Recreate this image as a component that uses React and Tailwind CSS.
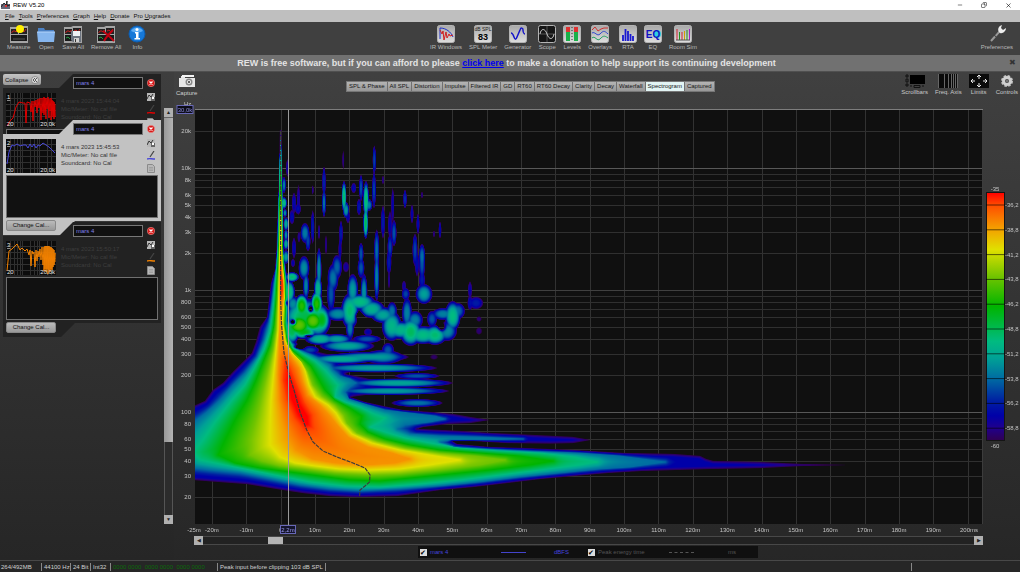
import { useEffect, useRef } from "react";
import { Minus, X, Copy } from "lucide-react";

const PLOT = { left: 195, top: 110, width: 788, height: 414 };

const xOf = (ms) => 280.6 + ms * 3.435;
const yOf = (hz) => 290 - 122 * Math.log10(hz / 1000);

// level (0..1) -> colour, same stops as the scale on the right
const STOPS = [
  [0, [48, 0, 80]],
  [0.05, [32, 0, 140]],
  [0.1, [0, 0, 168]],
  [0.16, [0, 32, 162]],
  [0.25, [0, 108, 162]],
  [0.33, [0, 160, 150]],
  [0.4, [0, 187, 128]],
  [0.47, [0, 184, 64]],
  [0.54, [0, 180, 0]],
  [0.66, [112, 196, 0]],
  [0.77, [224, 224, 0]],
  [0.86, [245, 155, 0]],
  [0.95, [255, 76, 0]],
  [1, [255, 0, 0]],
];

const LEVELS = [0, 0.25, 0.4, 0.54, 0.66, 0.77, 0.87, 0.96];

// contours of the main decay, one list of polygons per level
const CONTOURS = [
  [
    "150,420 194,406 205,401 213,390 223,383 233,372 242,363 252,353 256,342 260,327 267,317 269,300 271,283 275,270 276.5,250 277,230 278.3,200 279,170 279.5,153 280,130 281.2,130 281.7,153 282.3,170 283.2,200 283.5,240 285,262 287,275 288,290 290,305 289,320 291,335 295,341 300,346 308,350 318,352 335,356 352,357 352,360 340,365 352,368 352,371 345,374 355,376 365,378 372,380 372,385 383,387 372,389 372,394 350,397 365,402 383,406 403,410 430,412 453,414 470,417 489,420 470,423 447,424 423,427 417,429 440,430 460,431 490,433 533,435 573,437 590,440 573,443 550,443.5 507,443 473,441 452,441 457,444 490,447 523,448 573,450 623,453 673,454 700,456 706,459 713,461 760,462 800,464 845,465 800,466 760,468 707,469 673,470 640,471 607,473 573,476 540,479 507,483 473,487 440,490 397,496 357,497 330,496 303,493 277,489 247,484 220,482 194,480 150,478",
  ],
  [
    "150,445 194,422 207,412 220,400 233,385 245,373 257,357 264,340 269,322 272,300 274,283 276,267 277.3,250 278.2,210 279.4,165 280,138 281.2,138 281.8,165 282.7,210 283,250 285,270 287,285 288,300 287,320 288,335 292,343 300,350 312,355 322,360 330,365 333,370 340,376 350,379 356,383 350,387 345,392 349,399 365,404 385,410 410,413 435,416 445,419 430,422 405,425 398,429 410,434 440,436 480,437 523,439 480,440 450,440 440,442 455,447 490,449 530,451 580,453 620,456 665,462 630,467 600,469 560,473 520,477 480,482 440,486 400,489 360,491 330,489 300,485 270,479 240,473 210,470 194,468 150,466",
  ],
  [
    "193,452 203,440 215,422 232,400 245,385 255,367 264,350 270,332 273,310 275,285 277,265 278.2,240 279,200 279.8,165 280.2,145 281,145 281.4,165 282.2,200 282.6,240 284,265 286,283 287,300 286,322 288,338 293,347 303,354 315,361 325,370 332,378 338,385 336,391 335,397 345,402 360,407 372,413 385,418 380,422 370,427 385,432 405,438 430,443 460,448 500,451 540,453 575,457 597,462 580,465 540,470 500,475 460,480 420,484 380,487 345,486 310,482 280,476 250,470 220,464 200,460",
  ],
  [
    "218,455 225,440 235,420 247,400 256,380 263,362 270,345 274,325 276,300 277,280 278,260 278.7,240 279.5,205 280.2,170 281,170 281.8,205 282.2,240 283.2,262 285,280 285.5,300 285,325 287,341 293,351 302,358 311,366 318,378 325,390 335,400 350,408 362,416 360,424 368,432 385,439 410,445 440,450 480,453 520,456 553,461 530,465 490,470 450,474 410,478 380,481 350,480 320,476 290,472 260,468 235,463",
  ],
  [
    "250,455 250,440 257,415 263,390 268,370 273,350 276,330 277.5,300 278,280 278.8,260 279.3,235 280,195 281.2,195 281.8,235 282.7,262 284.5,280 285,300 284,325 287,344 294,354 302,362 308,372 313,385 322,396 335,405 344,415 347,423 357,433 377,441 405,448 440,453 475,456 505,460 480,465 440,470 400,474 370,475 335,473 305,469 280,466 262,461",
  ],
  [
    "270,445 270,425 271,400 274,370 276,350 278,330 278.5,300 279,280 279.5,258 280,220 281.2,220 281.8,258 284,280 284.5,298 282.5,320 285,340 292,353 300,360 305,370 309,385 315,397 328,405 336,413 342,423 352,434 372,443 400,450 430,455 460,460 430,465 400,469 370,470 340,469 315,466 295,463 280,457",
  ],
  [
    "283,420 279,400 278,375 279,350 280,325 280,300 279.8,272 280.6,255 282,272 283.5,285 283.5,297 282,310 281.7,325 284,343 292,358 299,368 303,382 308,395 320,405 330,416 338,426 348,437 368,447 392,453 410,459 395,463 365,465 335,463 312,459 296,450 288,437",
  ],
  [
    "285,360 290,368 297,385 304,402 312,415 313,428 305,430 295,418 287,400 283,380",
    "280.5,270 282.5,280 282.8,290 281.5,297 280.5,290",
  ],
].map((level) =>
  level.map((s) => s.split(" ").map((p) => p.split(",").map(Number)))
);

// later reflections: x, y, rx, ry, peak
const BLOBS = [
  [284, 185, 2, 8, 0.28], [284, 203, 3, 6, 0.4], [285, 213, 2, 4, 0.3], [286, 224, 2.5, 7, 0.35],
  [286, 235, 2, 6, 0.3], [286, 244, 2.5, 6, 0.35], [286, 257, 3, 7, 0.33], [287.5, 168, 1.5, 8, 0.08],
  [294, 203, 2, 10, 0.12], [298.5, 200, 1.5, 14, 0.08], [298, 209, 3, 5, 0.12], [292, 217, 2.5, 7, 0.12],
  [312.7, 190, 1, 4, 0.05], [324, 182, 1.8, 15, 0.17], [324, 203, 2, 14, 0.26], [343.3, 160, 1, 8, 0.04],
  [344, 197, 2.5, 16, 0.42], [346, 210, 3.2, 8, 0.32], [348, 217, 2, 6, 0.1], [353.7, 188, 2.5, 5, 0.12],
  [361, 188, 2, 13, 0.22], [359, 207, 2.2, 8, 0.14], [366, 200, 3, 19, 0.42], [365.7, 223, 2.6, 16, 0.44],
  [369, 205, 3.5, 6, 0.28], [374.3, 160, 1.8, 14, 0.2], [374, 190, 2, 18, 0.2], [383, 180, 1, 4, 0.05],
  [383, 222, 2, 16, 0.15], [392.7, 205, 1.5, 16, 0.1], [390, 225, 2, 13, 0.1], [394, 233, 2.6, 13, 0.22],
  [390, 247, 2.6, 12, 0.2], [405, 199, 1.8, 9, 0.18], [412, 214, 1.6, 9, 0.1], [418, 224, 1.6, 10, 0.12],
  [422, 195, 1, 3, 0.04], [440, 230, 1.5, 8, 0.11], [434, 234, 1, 3, 0.04], [415, 250, 2.6, 16, 0.2],
  [422, 256, 3.2, 12, 0.25], [305, 233, 4.5, 10, 0.27], [312.7, 227, 1.8, 16, 0.15], [308, 241, 2.6, 10, 0.2],
  [294, 248, 2, 10, 0.12], [299, 237, 1.5, 5, 0.06], [341, 233, 1.8, 12, 0.15], [340, 250, 1.6, 12, 0.1],
  [361, 254, 2.6, 11, 0.22], [376.7, 250, 2.6, 20, 0.25], [319, 232, 1, 7, 0.07], [326, 245, 1, 9, 0.05],
  [293, 263, 2, 4, 0.1], [304, 268, 5.5, 12, 0.3], [306, 286, 3, 14, 0.28], [319, 270, 2.6, 22, 0.3],
  [318, 289, 4, 14, 0.38], [337, 267, 5, 12, 0.24], [333, 278, 5.5, 14, 0.26], [331, 294, 4, 18, 0.22],
  [346, 267, 3, 5, 0.08], [361, 268, 3.5, 10, 0.22], [376.7, 277, 2.6, 24, 0.28], [389, 262, 2.5, 12, 0.15],
  [389, 280, 1, 8, 0.06], [352.7, 290, 5.5, 16, 0.32], [364, 292, 3.5, 18, 0.3], [417, 264, 2, 12, 0.12],
  [422, 264, 3, 16, 0.22], [424, 294, 8.5, 10, 0.33], [422, 280, 3, 8, 0.15], [405.7, 294, 4, 6, 0.2],
  [404, 286, 2, 5, 0.08], [292, 277, 7, 5, 0.42], [289, 292, 6, 12, 0.42], [293, 304, 6, 8, 0.3],
  [305, 318, 22, 20, 0.46], [318, 320, 13, 17, 0.46], [292, 330, 8, 14, 0.46],
  [301.7, 306, 7, 12, 0.58], [316.7, 304, 6, 13, 0.58], [299, 325, 14, 12, 0.64], [313, 321, 12, 12, 0.64],
  [321.7, 320, 8, 13, 0.52], [304, 332, 13, 7, 0.52], [338, 314, 13, 7, 0.3], [350, 311, 9, 18, 0.42],
  [360, 302, 15, 8, 0.4], [371.7, 309, 13, 9, 0.37], [383, 315, 12, 8, 0.34], [391.7, 326, 10, 15, 0.38],
  [392, 311, 5, 9, 0.26], [401, 330, 14, 9, 0.38], [410.7, 332, 11, 14, 0.44], [423, 335, 15, 9, 0.4],
  [435, 335, 12, 10, 0.42], [407, 313, 5, 15, 0.28], [415, 320, 8, 9, 0.28], [447, 331, 10, 10, 0.3],
  [452.7, 316, 8, 15, 0.4], [458, 311, 7, 8, 0.25], [443, 314, 11, 6, 0.28], [432, 319, 5, 8, 0.22],
  [476, 303, 7, 6, 0.15], [470, 290, 2, 8, 0.09], [470, 303, 2.5, 7, 0.12], [479, 319, 2.2, 2.2, 0.03],
  [479, 331, 2.6, 3, 0.03], [320, 339, 15, 6, 0.37], [337, 339, 15, 5, 0.33], [347, 346, 27, 6, 0.34],
  [367, 339, 14, 4, 0.22], [350, 328, 4, 12, 0.27], [368, 332, 4, 3.5, 0.1], [383, 357, 20, 7, 0.3],
  [388, 350, 6, 7, 0.22], [368, 357, 40, 5, 0.32], [342, 359, 34, 5, 0.36], [376, 368, 60, 4.5, 0.33],
  [417, 376, 22, 3, 0.22], [398, 383, 54, 4.5, 0.34], [390, 391, 58, 4, 0.32], [417, 403, 25, 4, 0.26],
  [434, 357, 3, 2, 0.02], [310, 350, 9, 4, 0.2],
];

const HOLES = [
  [293, 322, 3.5, 3.5, 0.75], [310.6, 309, 3, 4, 0.6], [286.5, 303, 2, 4, 0.3], [299, 347, 6, 2.5, 0.5],
  [442, 327, 5, 5, 0.4], [359, 316, 5, 5, 0.35], [308, 336, 5, 2, 0.4],
];

const ENERGY_PATH =
  "M280.6 131V300L281.7 327 284 353 288.7 373 294 390 300 412 306.7 430 313 442 323 451 337 457 353 463 365 468 370 475 369.5 482 365 486 360 490 359.5 497";

const insidePoly = (poly, x, y) => {
  let inside = false;
  for (let i = 0, j = poly.length - 1; i < poly.length; j = i++) {
    const [xi, yi] = poly[i];
    const [xj, yj] = poly[j];
    if (yi > y !== yj > y && x < ((xj - xi) * (y - yi)) / (yj - yi) + xi) {
      inside = !inside;
    }
  }
  return inside;
};

const distance = (polys, x, y) => {
  let best = 1e9;
  for (const poly of polys) {
    for (let i = 0, j = poly.length - 1; i < poly.length; j = i++) {
      const ax = poly[j][0];
      const ay = poly[j][1];
      const dx = poly[i][0] - ax;
      const dy = poly[i][1] - ay;
      let u = ((x - ax) * dx + (y - ay) * dy) / (dx * dx + dy * dy);
      u = u < 0 ? 0 : u > 1 ? 1 : u;
      const ex = ax + u * dx - x;
      const ey = ay + u * dy - y;
      const d = ex * ex + ey * ey;
      if (d < best) best = d;
    }
  }
  return Math.sqrt(best);
};

const mainLevel = (x, y) => {
  let k = -1;
  while (k < LEVELS.length - 1 && CONTOURS[k + 1].some((p) => insidePoly(p, x, y))) k++;
  if (k < 0) return -0.05 * distance(CONTOURS[0], x, y);
  const d0 = distance(CONTOURS[k], x, y);
  if (k === LEVELS.length - 1) return Math.min(1, LEVELS[k] + d0 * 0.008);
  const d1 = distance(CONTOURS[k + 1], x, y);
  let f = d0 / (d0 + d1);
  if (k === 0) f = Math.max(f, Math.min(0.4, d0 * 0.14));
  return LEVELS[k] + (LEVELS[k + 1] - LEVELS[k]) * f;
};

const colourOf = (t) => {
  for (let i = 1; i < STOPS.length; i++) {
    if (t <= STOPS[i][0]) {
      const [a, ca] = STOPS[i - 1];
      const [b, cb] = STOPS[i];
      const f = Math.max(0, (t - a) / (b - a));
      return ca.map((c, n) => c + (cb[n] - c) * f);
    }
  }
  return STOPS[STOPS.length - 1][1];
};

const SOFT = 0.03;

const drawSpectrogram = (canvas) => {
  const ctx = canvas.getContext("2d");
  const { width, height, left, top } = PLOT;
  const field = new Float32Array(width * height);

  const addBlob = ([bx, by, rx, ry, peak], fn) => {
    const x0 = Math.max(0, Math.floor(bx - rx * 1.6 - left));
    const x1 = Math.min(width - 1, Math.ceil(bx + rx * 1.6 - left));
    const y0 = Math.max(0, Math.floor(by - ry * 1.6 - top));
    const y1 = Math.min(height - 1, Math.ceil(by + ry * 1.6 - top));
    for (let y = y0; y <= y1; y++) {
      for (let x = x0; x <= x1; x++) {
        const r2 = ((x + left + 0.5 - bx) / rx) ** 2 + ((y + top + 0.5 - by) / ry) ** 2;
        fn(y * width + x, peak, r2);
      }
    }
  };

  for (let y = 0; y < height; y++) {
    for (let x = 0; x < width; x++) {
      const px = x + left + 0.5;
      const py = y + top + 0.5;
      const t = px > 850 || (px > 310 && py < 335) ? -0.5 : mainLevel(px, py);
      field[y * width + x] = Math.exp(t / SOFT);
    }
  }
  BLOBS.forEach((b) =>
    addBlob(b, (i, peak, r2) => {
      field[i] += Math.exp((peak * (1 - r2 ** 1.3)) / SOFT);
    })
  );
  for (let i = 0; i < field.length; i++) field[i] = SOFT * Math.log(field[i]);
  HOLES.forEach((b) =>
    addBlob(b, (i, depth, r2) => {
      field[i] -= depth * Math.exp(-r2 * 2);
    })
  );

  const img = ctx.createImageData(width, height);
  for (let i = 0; i < field.length; i++) {
    const t = field[i];
    if (t < -0.03) continue;
    const [r, g, b] = colourOf(t);
    img.data[i * 4] = r;
    img.data[i * 4 + 1] = g;
    img.data[i * 4 + 2] = b;
    img.data[i * 4 + 3] = t > 0.01 ? 255 : ((t + 0.03) / 0.04) * 255;
  }
  ctx.putImageData(img, 0, 0);
};

const FREQS = [
  [20000, "20k"], [10000, "10k"], [8000, "8k"], [6000, "6k"], [5000, "5k"], [4000, "4k"], [3000, "3k"],
  [2000, "2k"], [1000, "1k"], [800, "800"], [600, "600"], [500, "500"], [400, "400"], [300, "300"],
  [200, "200"], [100, "100"], [80, "80"], [60, "60"], [50, "50"], [40, "40"], [30, "30"], [20, "20"],
];
const FREQ_LINES = [9000, 7000, 900, 700, 90, 70];
const TIMES = Array.from({ length: 23 }, (_, i) => i * 10 - 20);
const SCALE = ["-36,2", "-38,8", "-41,2", "-43,8", "-46,2", "-48,8", "-51,2", "-53,8", "-56,2", "-58,8"];

const Chart = () => {
  const ref = useRef(null);
  useEffect(() => drawSpectrogram(ref.current), []);

  return (
    <svg viewBox="174 98 846 438" className="block w-full h-auto" fontSize="6" fill="#c4c4c4">
      <defs>
        <linearGradient id="scale" x1="0" y1="1" x2="0" y2="0">
          {STOPS.map(([t, c]) => (
            <stop key={t} offset={t} stopColor={`rgb(${c.join(",")})`} />
          ))}
        </linearGradient>
      </defs>

      <rect x="195" y="110" width="788" height="414" fill="#101010" />
      <g shapeRendering="crispEdges">
        {TIMES.map((t) => (
          <rect key={t} x={Math.round(xOf(t))} y="110" width="1" height="414" fill="#323232" />
        ))}
        {[...FREQS.map((f) => f[0]), ...FREQ_LINES].map((f) => (
          <rect
            key={f}
            x="195"
            y={Math.round(yOf(f))}
            width="788"
            height="1"
            fill={f === 100 || f === 10000 ? "#585858" : f === 1000 ? "#404040" : "#303030"}
          />
        ))}
        <rect x="195" y="109" width="788" height="1" fill="#7d7d7d" />
        <rect x="982" y="110" width="1" height="414" fill="#3c3c3c" />
      </g>

      <foreignObject x="195" y="110" width="788" height="414">
        <canvas ref={ref} width={PLOT.width} height={PLOT.height} className="block" />
      </foreignObject>

      <path d={ENERGY_PATH} fill="none" stroke="#3c3c3c" strokeWidth="1.2" strokeDasharray="4 1" />
      <rect x="288" y="110" width="1" height="418" fill="#9a9a9a" shapeRendering="crispEdges" />

      <text x="184" y="106">Hz</text>
      <g textAnchor="end">
        {FREQS.map(([f, label]) => (
          <text key={f} x="191" y={yOf(f) + 2}>{label}</text>
        ))}
      </g>
      <rect x="177" y="105.5" width="16" height="8" fill="#0c0c18" stroke="#6868b8" />
      <text x="185" y="112" textAnchor="middle" fill="#8c8cd8">30,0k</text>

      <g textAnchor="middle">
        <text x="194" y="532">-25m</text>
        {TIMES.filter((t) => t < 200).map((t) => (
          <text key={t} x={xOf(t)} y="532">{t === 0 ? "0" : `${t}m`}</text>
        ))}
        <text x="969" y="532">200ms</text>
      </g>
      <rect x="280.5" y="525.5" width="15" height="8" fill="#14142c" stroke="#6868b8" />
      <text x="288" y="532" textAnchor="middle" fill="#9c9cf0">2,2m</text>

      <rect x="986.5" y="192.5" width="18" height="248" fill="url(#scale)" stroke="#151515" />
      <text x="995" y="191" textAnchor="middle">-35</text>
      {SCALE.map((s, i) => (
        <g key={s}>
          <rect x="986" y={204.5 + i * 24.8} width="19" height="1" fill="#000" opacity="0.6" />
          <text x="1005" y={207 + i * 24.8}>{s}</text>
        </g>
      ))}
      <text x="995" y="448" textAnchor="middle">-60</text>
    </svg>
  );
};

const Tile = ({ children, dark }) => (
  <svg viewBox="0 0 18 18" className="w-[18px] h-[18px]">
    <defs>
      <linearGradient id="tile" x1="0" y1="0" x2="0" y2="1">
        <stop offset="0" stopColor="#a8a8a8" />
        <stop offset="1" stopColor="#dedede" />
      </linearGradient>
    </defs>
    <rect x="0.5" y="0.5" width="17" height="17" rx="2" fill={dark ? "#161616" : "url(#tile)"} stroke="#b4b4b4" />
    {children}
  </svg>
);

// small stack of graph panels used by measure / save / remove
const Panels = ({ children }) => (
  <svg viewBox="0 0 18 18" className="w-[18px] h-[18px]">
    <path d="M0 2H7L9 1H18V18H0Z" fill="#a4a4a4" />
    <rect x="1" y="4" width="7" height="5" fill="#222" />
    <rect x="9" y="3" width="8" height="6" fill="#222" />
    <rect x="1" y="10" width="16" height="6" fill="#1a1a1a" />
    <path d="M1.500 8 3 6 5 6 6 7 7.500 5" stroke="#c02020" fill="none" />
    <path d="M10 6 12 5 14 7 16 4" stroke="#c02020" fill="none" />
    {children}
  </svg>
);

const Floppy = () => (
  <g>
    <path d="M7 6H17V17H9L7 15Z" fill="#6c7480" />
    <rect x="9" y="6" width="7" height="5" fill="#eef2f6" />
    <rect x="10" y="13" width="5" height="4" fill="#d0d0d0" />
    <rect x="11" y="14" width="1" height="3" fill="#333" />
  </g>
);

const fileTools = [
  ["Measure", <Panels><circle cx="10" cy="4" r="4" fill="#ffee00" /><path d="M3 14H15" stroke="#555" /></Panels>],
  [
    "Open",
    <svg viewBox="0 0 18 18" className="w-[18px] h-[18px]">
      <path d="M1 3H7L8 5H17V16H1Z" fill="#4a80c4" />
      <path d="M0 7H18L17 17H1Z" fill="#86b6ee" />
      <path d="M0 7H18" stroke="#b4d4fa" />
    </svg>,
  ],
  ["Save All", <Panels><path d="M2 13 4 12 6 14" stroke="#20a040" fill="none" /><Floppy /></Panels>],
  [
    "Remove All",
    <Panels><path d="M2 13 4 12 6 14" stroke="#20a040" fill="none" /><path d="M6 6C10 9 13 12 17 16M16 5C12 9 9 12 7 16" stroke="#c00010" strokeWidth="2" fill="none" /></Panels>,
  ],
  [
    "Info",
    <svg viewBox="0 0 18 18" className="w-[18px] h-[18px]">
      <circle cx="9" cy="9" r="8" fill="#1678d8" stroke="#0c5cb0" />
      <path d="M3 6A7 7 0 0 1 15 6Q9 9 3 6Z" fill="#5cacf4" />
      <circle cx="9" cy="4.500" r="1.500" fill="#fff" />
      <path d="M7 7H10.500V13H12V14.500H6.500V13H8V8.500H7Z" fill="#fff" />
    </svg>,
  ],
];

const signalTools = [
  ["IR Windows", <Tile><path d="M3 14V3C9 3 14 7 16 12" stroke="#2030c8" fill="none" /><path d="M3 5 5 9 6 6 7 15 9 7 10 13 12 9 13 11 16 10" stroke="#d02020" fill="none" /></Tile>],
  [
    "SPL Meter",
    <Tile>
      <text x="9" y="6" textAnchor="middle" fontSize="5" fill="#222">dB SPL</text>
      <text x="9" y="15" textAnchor="middle" fontSize="9" fontWeight="700" fill="#000">83</text>
    </Tile>,
  ],
  ["Generator", <Tile><path d="M2 8C3 8 4 9 5 12S7 15 8 12L11 5C12 2 14 3 14 5S15 9 16 9" stroke="#1414c8" strokeWidth="1.500" fill="none" /></Tile>],
  ["Scope", <Tile dark><path d="M1 9H17M9 1V17" stroke="#555" /><path d="M2 9C3 3 7 3 9 9S15 15 16 9" stroke="#c8c8c8" fill="none" /></Tile>],
  [
    "Levels",
    <Tile>
      <rect x="3" y="2" width="4" height="14" fill="#18b048" /><rect x="3" y="2" width="4" height="5" fill="#e03030" />
      <rect x="11" y="2" width="4" height="14" fill="#18b048" /><rect x="11" y="2" width="4" height="5" fill="#e03030" />
      <path d="M9 2V16" stroke="#333" strokeDasharray="1 2" />
    </Tile>,
  ],
  [
    "Overlays",
    <Tile>
      <path d="M1 5 4 2 7 6 10 4 13 3 17 3" stroke="#d03030" fill="none" />
      <path d="M1 8C4 6 6 12 9 9S13 5 17 9" stroke="#3048d0" fill="none" />
      <path d="M1 13C4 10 6 17 9 14S13 10 17 13" stroke="#20a060" fill="none" />
    </Tile>,
  ],
  ["RTA", <Tile><path d="M4 16V10M6.500 16V4M9 16V6M11.500 16V9M14 16V11" stroke="#1818d0" strokeWidth="1.800" /></Tile>],
  [
    "EQ",
    <Tile>
      <circle cx="13" cy="9" r="4" fill="#30d0e0" />
      <text x="9" y="13" textAnchor="middle" fontSize="10" fontWeight="700" fill="#1010c0">EQ</text>
    </Tile>,
  ],
  ["Room Sim", <Tile><path d="M3 15V4M8 15V7" stroke="#d02030" /><path d="M5.500 15V7M13 15V5" stroke="#209020" /><path d="M10.500 15V6" stroke="#d0a000" /><path d="M15.500 15V4" stroke="#a020c0" /><path d="M2 15H16" stroke="#555" /></Tile>],
];

const prefTools = [
  [
    "Preferences",
    <svg viewBox="0 0 18 18" className="w-[18px] h-[18px]">
      <path d="M3 16 12 6" stroke="#999" strokeWidth="2" strokeDasharray="6 1" />
      <path d="M11 7C9 4 11 1 14 0L13 3 15 5 18 3C18 6 15 9 12 8Z" fill="#ececec" />
    </svg>,
  ],
];

const axisTools = [
  [
    "Scrollbars",
    <svg viewBox="0 0 20 14" className="w-5 h-[14px]">
      <rect x="5" y="1" width="15" height="9" fill="#000" />
      <path d="M1 1H3V3H1ZM1 5H3V8H1ZM1 10H3V12H1ZM5 12H7M9 11.500H15V13.500H9ZM17 12H19" stroke="#111" fill="none" />
    </svg>,
  ],
  [
    "Freq. Axis",
    <svg viewBox="0 0 20 14" className="w-5 h-[14px]">
      <rect width="20" height="14" fill="#0a0a0a" />
      <path d="M0.500 0V14M6.500 0V14M10.500 0V14M13.500 0V14M15.500 0V14M17.500 0V14M19.500 0V14" stroke="#666" />
    </svg>,
  ],
  [
    "Limits",
    <svg viewBox="0 0 20 14" className="w-5 h-[14px]">
      <rect width="20" height="14" fill="#0a0a0a" />
      <path d="M10 1V5M10 13V9M2 7H6M18 7H14M8 3L10 1 12 3M8 11L10 13 12 11M4 5 2 7 4 9M16 5 18 7 16 9" stroke="#e8e8e8" fill="none" />
    </svg>,
  ],
  [
    "Controls",
    <svg viewBox="0 0 14 14" className="w-[14px] h-[14px]">
      <circle cx="7" cy="7" r="5" fill="none" stroke="#c0c0c0" strokeWidth="2" strokeDasharray="2.500 1.427" />
      <circle cx="7" cy="7" r="3.500" fill="none" stroke="#d0d0d0" strokeWidth="3" />
      <circle cx="7" cy="7" r="1.500" fill="#777" />
    </svg>,
  ],
];

const ToolGroup = ({ items, className }) => (
  <div className={className}>
    {items.map(([label, icon]) => (
      <button key={label} className="flex flex-col items-center">
        {icon}
        <span className="leading-[9px] whitespace-nowrap">{label}</span>
      </button>
    ))}
  </div>
);

const TRACES = {
  red: "M1 33 4 28 7 25 10 14 13 9 17 10 19 10 20 30 21 9 24 10 25 19 26 8 27 28 28 8 29 14 30 7 31 20 32 6 33 15 34 5 35 27 36 5 37 20 38 4 38 22 39 5 40 26 40 5 41 16 42 4 43 25 43 6 44 18 45 5 45 27 46 7 47 24 47 8 48 26 48 9 49 24 49 11",
  blue: "M1 25 3 13 6 6 8 7 11 5 14 7 17 6 20 6 22 9 24 5 26 8 28 5 30 9 32 6 34 7 37 4 40 6 43 8 46 11 49 14",
  orange: "M1 30 3 10 6 8 8 6 11 3 14 9 16 7 19 10 21 8 23 14 24 9 25 25 26 10 27 13 28 11 29 26 30 9 31 20 32 10 33 16 34 8 35 19 36 6 37 24 38 6 38 30 39 5 39 28 40 5 40 31 41 5 41 28 42 5 42 33 43 5 43 29 44 6 44 31 45 6 45 28 46 7 46 29 47 8 47 26 48 9 48 24 49 12 49 21",
};

const Thumb = ({ number, colour, trace }) => (
  <svg viewBox="0 0 50 34" className="w-[50px] h-[34px] shrink-0" fontSize="6" fill="#e0e0e0">
    <rect width="50" height="34" fill="#0c0c0c" />
    <path d="M4.500 0V34M8.500 0V34M11.500 0V34M14.500 0V34M16.500 0V34M24.500 0V34M28.500 0V34M31.500 0V34M33.500 0V34M41.500 0V34M45.500 0V34M0 5.500H50M0 11.500H50M0 17.500H50M0 23.500H50M0 29.500H50" stroke="#303030" />
    <path d={trace} fill="none" stroke={colour} />
    <text x="1" y="6" textDecoration="underline">{number}</text>
    <text x="1" y="33">20</text>
    <text x="49" y="33" textAnchor="end">20,0k</text>
  </svg>
);

const CardIcons = ({ colour }) => (
  <div className="w-[10px] flex flex-col items-center gap-1">
    <button aria-label="Remove measurement">
      <svg viewBox="0 0 8 8" className="block w-2 h-2">
        <circle cx="4" cy="4" r="3.700" fill="#d81818" stroke="#f0b0a8" strokeWidth="0.500" />
        <path d="M2.500 2.500 5.500 5.500M5.500 2.500 2.500 5.500" stroke="#fff" strokeWidth="1.300" />
      </svg>
    </button>
    <button aria-label="Save measurement" className="mt-0.5">
      <svg viewBox="0 0 8 8" className="block w-2 h-2">
        <rect width="8" height="8" fill="#b8b8b8" />
        <path d="M0 6 2 2 4 4 6 1" stroke="#333" fill="none" />
        <rect x="4" y="4" width="4" height="4" fill="#666" />
        <rect x="5" y="4" width="2" height="2" fill="#fff" />
      </svg>
    </button>
    <button aria-label="Trace colour">
      <svg viewBox="0 0 8 9" className="block w-2 h-[9px]">
        <path d="M7 0 3 6" stroke="#444" strokeWidth="1.200" />
        <path d="M0 8C2 7 4 8 8 8" stroke={colour} strokeWidth="1.400" fill="none" />
      </svg>
    </button>
    <button aria-label="Notes">
      <svg viewBox="0 0 8 9" className="block w-2 h-[9px]">
        <path d="M0.500 0.500H5.500L7.500 2.500V8.500H0.500Z" fill="#b8b8b8" stroke="#8a8a8a" />
        <path d="M2 3.500H6M2 5H6M2 6.500H6" stroke="#888" strokeWidth="0.500" />
      </svg>
    </button>
  </div>
);

const cardShape =
  "[clip-path:polygon(0_14px,56px_14px,70px_0,100%_0,100%_calc(100%-14px),72px_calc(100%-14px),58px_100%,0_100%)]";

const MeasurementCard = ({ number, time, colour, trace, active, className }) => (
  <article
    className={`relative h-[115px] px-[3px] pt-[3px] ${cardShape} ${
      active ? "bg-[#c2c2c2] text-[#333]" : "bg-[#222] text-[#3e3e3e]"
    } ${className}`}
  >
    <div className="flex h-[51px]">
      <div className="flex-1 min-w-0">
        <input
          aria-label={`Measurement ${number} name`}
          defaultValue="mars 4"
          className="block ml-[67px] w-[70px] h-3 px-0.5 bg-[#101010] border border-[#777] text-[#8080e8]"
        />
        <div className="flex gap-[3px] pt-1">
          <Thumb number={number} colour={colour} trace={trace} />
          <p className="pt-1 pl-0.5 leading-[8px] whitespace-nowrap">
            4 mars 2023 {time}
            <br />
            Mic/Meter: No cal file
            <br />
            Soundcard: No Cal
          </p>
        </div>
      </div>
      <div className="pt-0.5 pr-0.5">
        <CardIcons colour={colour} />
      </div>
    </div>
    <textarea
      aria-label={`Measurement ${number} notes`}
      className="block mt-px w-full h-[43px] resize-none bg-[#111] border border-[#707070]"
    />
    <button className="mt-0.5 w-[50px] h-[11px] rounded-xs border border-[#888] bg-linear-to-b from-[#bbb] to-[#999] text-[#111] leading-[9px]">
      Change Cal...
    </button>
  </article>
);

const tabs = [
  "SPL & Phase", "All SPL", "Distortion", "Impulse", "Filtered IR", "GD", "RT60", "RT60 Decay",
  "Clarity", "Decay", "Waterfall", "Spectrogram", "Captured",
];

const menus = [
  ["F", "ile"], ["T", "ools"], ["P", "references"], ["G", "raph"], ["H", "elp"], ["D", "onate"], ["U", "pgrades", "Pro "],
];

const checkClass =
  "appearance-none w-[7px] h-[7px] bg-[#ddd] text-black before:block before:text-[7px] before:leading-[7px] checked:before:content-['✔']";

const arrowClass =
  "w-[9px] h-[9px] shrink-0 bg-[#b0b0b0] text-[#222] text-[5px] leading-[9px] text-center";

export default function App() {
  return (
    <div className="min-h-screen flex flex-col bg-linear-to-b from-[#444] to-[#262626] text-[6px] leading-[8px] text-[#b8b8b8] font-['Liberation_Sans',Arial,sans-serif] overflow-hidden">
      {/* Title bar */}
      <header className="h-[10px] flex items-center justify-between bg-white text-black pl-px pr-2">
        <div className="flex items-center gap-[3px]">
          <svg viewBox="0 0 9 8" className="w-[9px] h-2">
            <rect y="3" width="9" height="5" fill="#667" />
            <path d="M0 6 3 2 5 4 6 0V5L9 4" stroke="#222" fill="none" />
            <rect x="4" y="4" width="2" height="2" fill="#d33" />
          </svg>
          <span>REW V5.20</span>
        </div>
        <div className="flex gap-[18px]">
          <button aria-label="Minimize"><Minus size={6} /></button>
          <button aria-label="Restore"><Copy size={6} className="-scale-x-100" /></button>
          <button aria-label="Close"><X size={7} /></button>
        </div>
      </header>

      <nav className="h-3 flex items-center gap-1 px-[5px] bg-[#bfbfbf] text-[#111]">
        {menus.map(([key, rest, before]) => (
          <button key={rest}>
            {before}<u>{key}</u>{rest}
          </button>
        ))}
      </nav>

      {/* Toolbar */}
      <div className="h-[33px] flex justify-between pt-[3px] pl-[7px] pr-[7px] bg-[#404040]">
        <ToolGroup items={fileTools} className="flex items-start gap-[7px]" />
        <ToolGroup items={signalTools} className="flex items-start gap-[7px]" />
        <ToolGroup items={prefTools} className="flex items-start" />
      </div>

      <div className="h-[17px] flex items-center bg-[#717171] border-b border-[#505050] px-1">
        <p className="flex-1 text-center text-[9px] leading-[12px] font-bold text-[#e4e4e4]">
          REW is free software, but if you can afford to please{" "}
          <a href="#donate" className="text-[#0000ee] underline">click here</a>{" "}
          to make a donation to help support its continuing development
        </p>
        <button aria-label="Hide banner" className="text-[#333] text-[8px]">✖</button>
      </div>

      <main className="flex-1 flex">
        {/* Measurements */}
        <aside className="w-[174px] shrink-0 flex justify-between pr-px bg-linear-to-b from-[#3e3e3e] to-[#262626]">
          <div className="w-[158px] ml-[3px] pt-0.5">
            <button className="relative z-10 flex items-center justify-between w-[38px] h-[11px] px-0.5 -mb-[11px] rounded-xs bg-linear-to-b from-[#c4c4c4] to-[#9a9a9a] text-[#111]">
              Collapse
              <svg viewBox="0 0 8 8" className="w-2 h-2">
                <circle cx="4" cy="4" r="3.500" fill="#ddd" stroke="#555" strokeWidth="0.500" />
                <path d="M4 2 2 4 4 6M6 2 4 4 6 6" stroke="#222" strokeWidth="0.700" fill="none" />
              </svg>
            </button>
            <MeasurementCard number="1" time="15:44:04" colour="#e00000" trace={TRACES.red} />
            <MeasurementCard number="2" time="15:45:53" colour="#4848d8" trace={TRACES.blue} active className="-mt-[69px]" />
            <MeasurementCard number="3" time="15:50:17" colour="#f08000" trace={TRACES.orange} className="-mt-[13px]" />
          </div>
          <div className="w-[9px] mt-9 mb-9 flex flex-col border-x border-[#555] bg-[#2c2c2c]">
            <button aria-label="Scroll up" className={`${arrowClass} -mx-px`}>▲</button>
            <div className="h-[325px] -mx-px bg-linear-to-r from-[#989898] to-[#b4b4b4] border-t border-[#666]" />
            <button aria-label="Scroll down" className={`${arrowClass} -mx-px mt-auto`}>▼</button>
          </div>
        </aside>

        {/* Graph */}
        <section className="flex-1 min-w-0 flex flex-col">
          <div className="h-[26px] flex items-start pt-0.5 px-[2px]">
            <button className="flex flex-col items-center text-[#d0d0d0]">
              <svg viewBox="0 0 16 14" className="w-4 h-[14px]">
                <path d="M0 4H2V2H6V4H16V13H0Z" fill="#e6e6e6" />
                <rect x="3" y="1" width="12" height="2" fill="#f4f4f4" />
                <circle cx="10" cy="8" r="3.500" fill="#888" />
                <circle cx="10" cy="8" r="2" fill="#eee" />
                <circle cx="10" cy="8" r="1" fill="#333" />
              </svg>
              <span className="mt-px">Capture</span>
            </button>
            <div className="flex-1 flex justify-center pt-[7px] pr-[38px]">
              <div className="flex border border-[#777]">
                {tabs.map((tab) => (
                  <button
                    key={tab}
                    className={`h-[9px] px-[2px] leading-[9px] whitespace-nowrap text-[#151515] border-r border-[#707070] last:border-r-0 ${
                      tab === "Spectrogram" ? "bg-[#e2f4f4]" : "bg-linear-to-b from-[#b4b4b4] to-[#989898]"
                    }`}
                  >
                    {tab}
                  </button>
                ))}
              </div>
            </div>
            <ToolGroup items={axisTools} className="flex items-start gap-[7px] text-[#c8c8c8]" />
          </div>

          <Chart />

          <div className="ml-[20px] mr-[37px] h-[9px] flex border-y border-[#484848] bg-[#222]">
            <button aria-label="Scroll left" className={`${arrowClass} -my-px`}>◀</button>
            <div className="ml-[65px] w-[15px] bg-[#b4b4b4]" />
            <button aria-label="Scroll right" className={`${arrowClass} -my-px ml-auto`}>▶</button>
          </div>

          <div className="self-center mr-[18px] mt-px w-[340px] h-3 flex items-center bg-[#101010] text-[#4444dd] pl-0.5">
            <label className="flex items-center gap-[3px] w-[81px]">
              <input type="checkbox" defaultChecked className={checkClass} />
              mars 4
            </label>
            <span className="w-[25px] h-px bg-[#4444cc]" />
            <span className="ml-7">dBFS</span>
            <label className="flex items-center gap-[3px] ml-[19px] w-[81px] text-[#555]">
              <input type="checkbox" defaultChecked className={checkClass} />
              Peak energy time
            </label>
            <span className="w-[25px] border-t border-dashed border-[#555]" />
            <span className="ml-[34px] text-[#555]">ms</span>
          </div>
        </section>
      </main>

      <footer className="h-3 flex items-center border-t border-[#484848] bg-[#262626] text-[#d0d0d0]">
        <span className="w-[42px] pl-px border-r border-[#888]">264/492MB</span>
        <span className="w-[29px] pl-0.5 border-r border-[#888] whitespace-nowrap">44100 Hz</span>
        <span className="w-5 pl-0.5 border-r border-[#888] whitespace-nowrap">24 Bit</span>
        <span className="w-5 pl-0.5 border-r border-[#888]">Int32</span>
        <span className="w-[107px] pl-0.5 border-r border-[#888] text-[#0a6a0a] whitespace-pre">0000 0000  0000 0000  0000 0000</span>
        <span className="px-0.5 border-r border-[#888]">Peak input before clipping 103 dB SPL</span>
        <span className="ml-auto mr-[108px] h-2 border-r border-[#888]" />
      </footer>
    </div>
  );
}
